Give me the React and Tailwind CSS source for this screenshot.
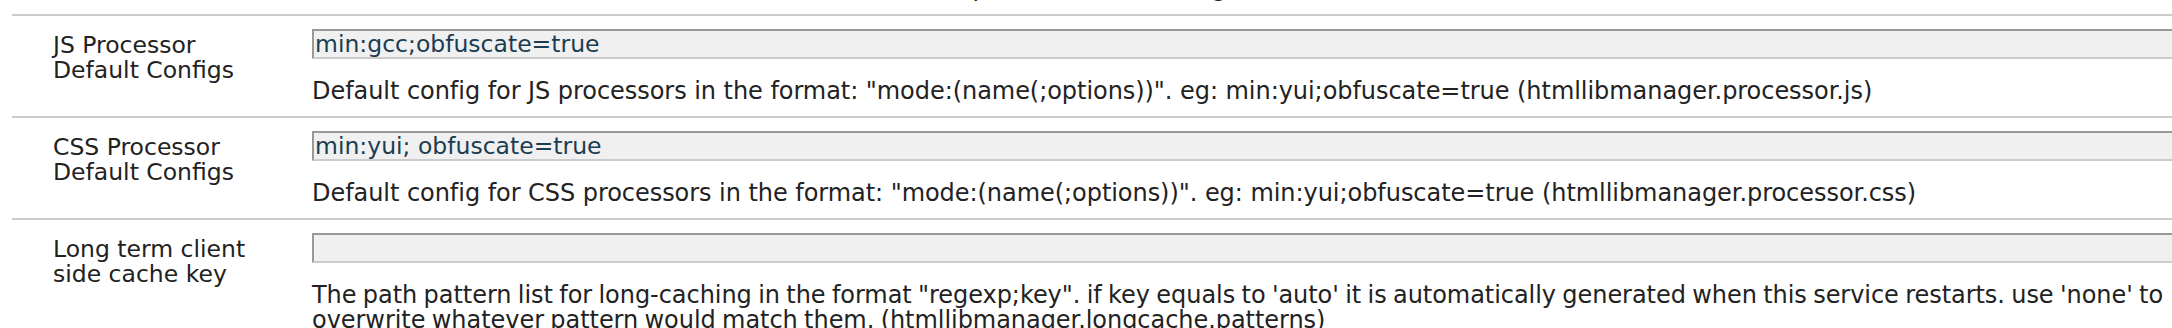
export default function App() {
  const rows = [
    {
      label: ["JS Processor", "Default Configs"],
      value: "min:gcc;obfuscate=true",
      desc: [
        'Default config for JS processors in the format: "mode:(name(;options))". eg: min:yui;obfuscate=true (htmllibmanager.processor.js)',
      ],
      tight: false,
    },
    {
      label: ["CSS Processor", "Default Configs"],
      value: "min:yui; obfuscate=true",
      desc: [
        'Default config for CSS processors in the format: "mode:(name(;options))". eg: min:yui;obfuscate=true (htmllibmanager.processor.css)',
      ],
      tight: false,
    },
    {
      label: ["Long term client", "side cache key"],
      value: "",
      desc: [
        "The path pattern list for long-caching in the format \"regexp;key\". if key equals to 'auto' it is automatically generated when this service restarts. use 'none' to",
        "overwrite whatever pattern would match them. (htmllibmanager.longcache.patterns)",
      ],
      tight: true,
    },
  ];

  return (
    <div className="w-[2172px] h-[328px] overflow-hidden bg-white text-[#222222] text-[23.5px] leading-[25px] font-['DejaVu_Sans',sans-serif]">
      <div className="w-[2400px] pl-[12px]">
        <div className="flex h-[14px] pl-[300px] text-[24px]">
          <div className="-mt-[24px] h-[25px] whitespace-nowrap">
            If checked, forces the CQ URL info to be used for all requests (htmllibmanager.forceCQUrlInfo)
          </div>
        </div>
        {rows.map((r, i) => (
          <div key={i} className="flex h-[102px] border-t-2 border-[#cccccc]">
            <div className="w-[300px] shrink-0 pl-[41px] pt-[17px]">
              {r.label.map((l, j) => (
                <div key={j}>{l}</div>
              ))}
            </div>
            <div className="flex-1 pt-[13px]">
              <input
                readOnly
                value={r.value}
                className="block h-[30px] w-full border-t-2 border-l-2 border-b-2 border-t-[#999999] border-l-[#999999] border-b-[#cccccc] bg-[#f0f0f0] px-[1px] text-[23.5px] text-[#1b3d50] outline-none"
              />
              <div className="mt-[20px] whitespace-nowrap text-[24px]">
                {r.desc.map((d, j) => (
                  <div
                    key={j}
                    className={r.tight ? "tracking-[-0.05px] [word-spacing:-1.2px]" : "tracking-[-0.05px]"}
                  >
                    {d}
                  </div>
                ))}
              </div>
            </div>
          </div>
        ))}
      </div>
    </div>
  );
}
